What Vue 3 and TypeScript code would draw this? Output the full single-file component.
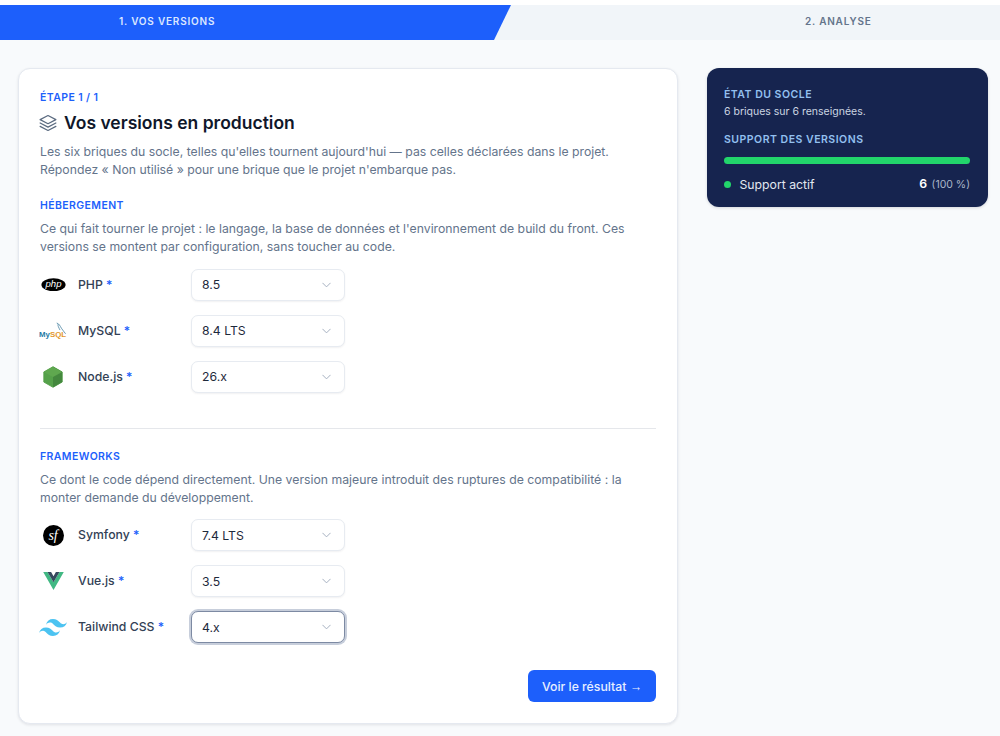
<script setup lang="ts">
interface Row { key: string; label: string; value: string; focus?: boolean }
const hosting: Row[] = [
  { key: 'php', label: 'PHP', value: '8.5' },
  { key: 'mysql', label: 'MySQL', value: '8.4 LTS' },
  { key: 'node', label: 'Node.js', value: '26.x' },
]
const frameworks: Row[] = [
  { key: 'symfony', label: 'Symfony', value: '7.4 LTS' },
  { key: 'vue', label: 'Vue.js', value: '3.5' },
  { key: 'tailwind', label: 'Tailwind CSS', value: '4.x', focus: true },
]
const sections = [
  { title: 'HÉBERGEMENT', text: "Ce qui fait tourner le projet : le langage, la base de données et l'environnement de build du front. Ces versions se montent par configuration, sans toucher au code.", rows: hosting },
  { title: 'FRAMEWORKS', text: 'Ce dont le code dépend directement. Une version majeure introduit des ruptures de compatibilité : la monter demande du développement.', rows: frameworks },
]
</script>

<template>
  <div class="page">
    <nav class="steps">
      <div class="step active"><span>1. VOS VERSIONS</span></div>
      <div class="step"><span>2. ANALYSE</span></div>
    </nav>
    <main class="layout">
      <section class="card">
        <p class="eyebrow">ÉTAPE 1 / 1</p>
        <h1 class="title">
          <svg class="stack" viewBox="0 0 24 24" fill="none" stroke="#5b6b80" stroke-width="1.600" stroke-linejoin="round" stroke-linecap="round">
            <path d="M12 2 1.500 7.500 12 13l10.500-5.500L12 2Z" />
            <path d="m1.500 12 10.500 5.500L22.500 12" />
            <path d="M1.500 16.500 12 22l10.500-5.500" />
          </svg>
          Vos versions en production
        </h1>
        <p class="lead">Les six briques du socle, telles qu'elles tournent aujourd'hui — pas celles déclarées dans le projet. Répondez « Non utilisé » pour une brique que le projet n'embarque pas.</p>

        <div v-for="(s, i) in sections" :key="s.title" class="section" :class="{ ruled: i > 0 }">
          <h2 class="section-title">{{ s.title }}</h2>
          <p class="section-text">{{ s.text }}</p>
          <div class="rows">
            <div v-for="r in s.rows" :key="r.key" class="row">
              <span class="logo">
                <svg v-if="r.key === 'php'" viewBox="0 0 30 16" width="25" height="13.500">
                  <ellipse cx="15" cy="8" rx="14.500" ry="7.800" fill="#000" />
                  <text x="15" y="11.300" text-anchor="middle" font-family="'Liberation Sans', sans-serif" font-size="11.500" font-style="italic" fill="#fff">php</text>
                </svg>
                <svg v-else-if="r.key === 'mysql'" viewBox="0 0 30 20" width="30" height="20">
                  <text x="0" y="16.500" font-family="'Liberation Sans', sans-serif" font-size="8" font-weight="700" textLength="29" lengthAdjust="spacingAndGlyphs"><tspan fill="#1f7ba6">My</tspan><tspan fill="#e3972f">SQL</tspan></text>
                  <path d="M19 1.500c2.500.5 3.500 3 5 5.500 1.500 2.300 3 4 4.500 6M20.500 2.500c-.5 2 .5 3.500 2 6.500" fill="none" stroke="#3f7c9c" stroke-width="0.800" />
                </svg>
                <svg v-else-if="r.key === 'node'" viewBox="0 0 24 24" width="22" height="22">
                  <path d="M12 .8 22 6.500v11L12 23.200 2 17.500v-11Z" fill="#55a14a" stroke="#55a14a" stroke-width="1" stroke-linejoin="round" />
                  <path d="M12 .8 22 6.500v11L12 23.200Z" fill="#44883e" />
                  <path d="M2 6.500 12 12l10-5.500L12 .8Z" fill="#5fa84f" />
                </svg>
                <svg v-else-if="r.key === 'symfony'" viewBox="0 0 24 24" width="21" height="21">
                  <circle cx="12" cy="12" r="12" fill="#000" />
                  <text x="11.500" y="17.500" text-anchor="middle" font-family="'Liberation Serif', serif" font-size="16" font-style="italic" fill="#fff">sf</text>
                </svg>
                <svg v-else-if="r.key === 'vue'" viewBox="0 0 24 21" width="21" height="18">
                  <path d="M0 0h5l7 12L19 0h5L12 21Z" fill="#41b883" />
                  <path d="M5 0h4.200L12 5l2.800-5H19l-7 12Z" fill="#35495e" />
                </svg>
                <svg v-else viewBox="0 0 30 18" width="28" height="17">
                  <path fill="#4cc3f1" d="M15 0C11 0 8.500 2 7.500 6c1.500-2 3.250-2.750 5.250-2.250 1.140.29 1.960 1.110 2.860 2.030C17.090 7.260 18.780 9 22.500 9c4 0 6.500-2 7.500-6-1.500 2-3.250 2.750-5.250 2.250-1.140-.29-1.960-1.110-2.860-2.030C20.410 1.740 18.720 0 15 0ZM7.500 9C3.500 9 1 11 0 15c1.500-2 3.250-2.750 5.250-2.250 1.140.29 1.960 1.110 2.860 2.030C9.590 16.260 11.280 18 15 18c4 0 6.500-2 7.500-6-1.500 2-3.250 2.750-5.250 2.250-1.140-.29-1.960-1.110-2.860-2.030C12.910 10.740 11.220 9 7.500 9Z" />
                </svg>
              </span>
              <span class="label">{{ r.label }} <em>*</em></span>
              <div class="select" :class="{ focus: r.focus }">
                <span>{{ r.value }}</span>
                <svg viewBox="0 0 12 8" width="9" height="6" fill="none" stroke="#a3afbf" stroke-width="1.300" stroke-linecap="round" stroke-linejoin="round"><path d="m1 1.500 5 5 5-5" /></svg>
              </div>
            </div>
          </div>
        </div>

        <div class="actions">
          <button class="primary" type="button">Voir le résultat <span class="arrow">→</span></button>
        </div>
      </section>

      <aside class="side">
        <p class="side-head">ÉTAT DU SOCLE</p>
        <p class="side-sub">6 briques sur 6 renseignées.</p>
        <p class="side-head second">SUPPORT DES VERSIONS</p>
        <div class="bar"></div>
        <div class="legend">
          <span class="dot"></span>
          <span class="legend-label">Support actif</span>
          <span class="legend-value"><b>6</b> <small>(100 %)</small></span>
        </div>
      </aside>
    </main>
  </div>
</template>

<style>
html, body { margin: 0; background: #fff; }
</style>

<style scoped>
* { box-sizing: border-box; }
.page {
  font-family: Inter, "Liberation Sans", sans-serif;
  height: 736px;
  overflow: hidden;
  padding-top: 5px;
  background: linear-gradient(#fff 5px, #f8fafc 5px);
  color: #0f172a;
}
.steps {
  display: flex;
  height: 35px;
  background: #f1f5f9;
}
.step {
  flex: 1;
  display: flex;
  align-items: center;
  justify-content: flex-start;
  padding-left: 294px;
  padding-bottom: 3px;
  font-size: 10px;
  font-weight: 600;
  letter-spacing: 0.8px;
  color: #64748b;
}
.step.active {
  flex: 0 0 511px;
  background: #1d5ffb;
  color: #dbe7ff;
  clip-path: polygon(0 0, 100% 0, 494px 100%, 0 100%);
  padding-left: 119px;
}
.layout {
  display: flex;
  align-items: flex-start;
  gap: 29px;
  padding: 28px 12px 0 18px;
}
.card {
  flex: 0 0 660px;
  height: 656px;
  background: #fff;
  border: 1px solid #e5e9f0;
  border-radius: 12px;
  box-shadow: 0 1px 3px rgba(15, 23, 42, 0.1);
  padding: 21.500px 21px 0;
}
.eyebrow, .section-title {
  margin: 0;
  font-size: 10.500px;
  line-height: 14px;
  font-weight: 600;
  letter-spacing: 0.4px;
  color: #1d5ffb;
}
.title {
  display: flex;
  align-items: center;
  gap: 7px;
  margin: 5.500px 0 0;
  font-size: 17.500px;
  line-height: 26px;
  font-weight: 600;
  color: #0f172a;
}
.stack { width: 18px; height: 18px; flex: none; margin-left: -1px; }
.lead {
  margin: 7px 0 0;
  font-size: 12.250px;
  line-height: 18.375px;
  color: #64748b;
}
.section { margin-top: 19px; }
.section.ruled {
  margin-top: 35px;
  padding-top: 21px;
  border-top: 1px solid #e5e7eb;
}
.section-text {
  margin: 7px 0 0;
  font-size: 12.250px;
  line-height: 18.375px;
  color: #64748b;
}
.rows {
  display: flex;
  flex-direction: column;
  gap: 14px;
  margin-top: 12px;
}
.row {
  display: flex;
  align-items: center;
  height: 32px;
}
.logo {
  flex: none;
  width: 28px;
  margin-right: 10px;
  margin-left: -1px;
  margin-right: 11px;
  display: flex;
  align-items: center;
  justify-content: center;
}
.label {
  flex: none;
  width: 113px;
  font-size: 12.250px;
  font-weight: 500;
  color: #334155;
  margin-top: -1px;
}
.label em {
  font-style: normal;
  color: #1d5ffb;
}
.select {
  flex: none;
  width: 154px;
  height: 32px;
  display: flex;
  align-items: center;
  justify-content: space-between;
  padding: 0 13px 0 10px;
  font-size: 12.250px;
  color: #1e293b;
  background: #fff;
  border: 1px solid #e7ebf1;
  border-radius: 7px;
  box-shadow: 0 1px 2px rgba(15, 23, 42, 0.06);
}
.select.focus {
  border-color: #7d8aa3;
  box-shadow: 0 0 0 2px #c7cedb;
}
.actions {
  display: flex;
  justify-content: flex-end;
  margin-top: 27px;
}
.primary {
  font-family: inherit;
  width: 128px;
  height: 32px;
  font-size: 12.250px;
  font-weight: 500;
  color: #e8efff;
  background: #1d5ffb;
  border: none;
  border-radius: 6px;
  padding: 0;
}
.arrow { font-family: "Liberation Sans", sans-serif; font-weight: 400; }
.side {
  flex: 0 0 281px;
  height: 139px;
  background: #16244f;
  border-radius: 12px;
  padding: 20px 18px 0 17px;
  box-shadow: 0 1px 3px rgba(15, 23, 42, 0.15);
}
.side-head {
  margin: 0;
  font-size: 10.500px;
  line-height: 14px;
  font-weight: 600;
  letter-spacing: 0.5px;
  color: #93c0ef;
}
.side-head.second { margin-top: 14px; }
.side-sub {
  margin: 3px 0 0;
  font-size: 10.500px;
  line-height: 14px;
  color: #cbd5e1;
}
.bar {
  height: 7px;
  margin-top: 10px;
  border-radius: 4px;
  background: #22d56b;
}
.legend {
  display: flex;
  align-items: center;
  margin-top: 11px;
  font-size: 12.250px;
  line-height: 18px;
  color: #e2e8f0;
}
.dot {
  width: 7px;
  height: 7px;
  border-radius: 50%;
  background: #22d56b;
  margin-right: 8.500px;
}
.legend-value { margin-left: auto; }
.legend-value b { font-weight: 600; color: #fff; }
.legend-value small { font-size: 10.500px; color: #aab6c8; margin-left: 1px; }
</style>
